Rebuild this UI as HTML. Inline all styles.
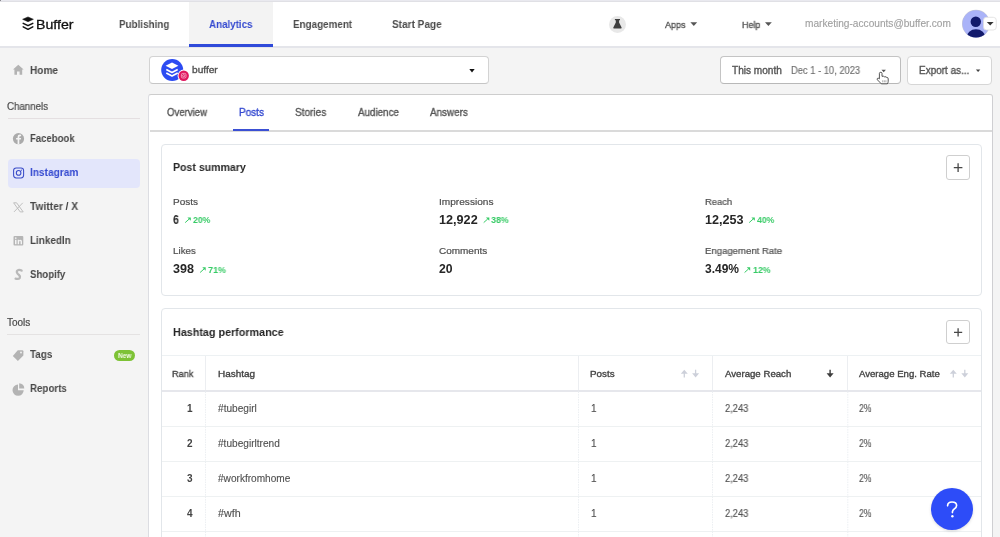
<!DOCTYPE html>
<html><head><meta charset="utf-8">
<style>
*{box-sizing:border-box;margin:0;padding:0}
html,body{width:1000px;height:537px;overflow:hidden;background:#f4f4f4;font-family:"Liberation Sans",sans-serif;color:#3d3d3d}
.a{position:absolute}
.t{position:absolute;white-space:nowrap;line-height:1;display:inline-block;transform-origin:0 0;will-change:transform}
svg{position:absolute;overflow:visible}
</style></head>
<body>
<!-- header -->
<div class="a" style="left:0;top:0;width:1000px;height:1px;background:#e9e9ef"></div>
<div class="a" style="left:0;top:1px;width:1000px;height:1px;background:#e0e0e5"></div>
<div class="a" style="left:0;top:0;width:1px;height:1px;background:#8a8a8f"></div>
<div class="a" style="left:0;top:2px;width:1000px;height:44px;background:#fff"></div>
<div class="a" style="left:0;top:46px;width:1000px;height:2.4px;background:#e4e5ea"></div>
<div class="a" style="left:189px;top:2px;width:83.5px;height:44px;background:#f3f3f3"></div>
<div class="a" style="left:189px;top:44px;width:83.5px;height:2.5px;background:#2f4ad9"></div>

<!-- buffer logo -->
<svg style="left:0;top:0" width="40" height="40">
  <polygon points="28,16.9 33.4,19.3 28,21.7 22.6,19.3" fill="#111" stroke="#111" stroke-width="0.5" stroke-linejoin="round"/>
  <polyline points="23.2,23.3 28,25.7 32.8,23.3" fill="none" stroke="#111" stroke-width="1.5" stroke-linejoin="round" stroke-linecap="round"/>
  <polyline points="23.2,26.9 28,29.3 32.8,26.9" fill="none" stroke="#111" stroke-width="1.5" stroke-linejoin="round" stroke-linecap="round"/>
</svg>

<!-- flask -->
<div class="a" style="left:608.9px;top:15.5px;width:17px;height:17px;border-radius:50%;background:#e8e8e8"></div>
<svg style="left:0;top:0" width="1" height="1">
  <path d="M614.9,19.1 H620 V20.2 H619.1 V22.6 L621.6,27.5 Q621.9,28.5 620.9,28.5 H614 Q613,28.5 613.3,27.5 L615.8,22.6 V20.2 H614.9 Z" fill="#3f3f3f"/>
</svg>
<!-- carets -->
<svg style="left:0;top:0" width="1" height="1">
  <polygon points="690.4,22.2 697.2,22.2 693.8,26" fill="#555"/>
  <polygon points="765,22.2 771.8,22.2 768.4,26" fill="#555"/>
</svg>

<!-- avatar -->
<svg style="left:0;top:0" width="1" height="1">
  <defs><clipPath id="avc"><circle cx="976" cy="23.8" r="13.8"/></clipPath></defs>
  <circle cx="976" cy="23.8" r="14" fill="#c9c9d2"/>
  <circle cx="976" cy="23.8" r="13.6" fill="#aab3f8"/>
  <g clip-path="url(#avc)">
    <circle cx="975.8" cy="21.8" r="5.2" fill="#121a6c"/>
    <ellipse cx="976" cy="37.5" rx="9.5" ry="8.3" fill="#121a6c"/>
  </g>
  <rect x="983.5" y="17.3" width="12.8" height="12.7" rx="3" fill="#fff" stroke="#dedede" stroke-width="0.8"/>
  <polygon points="986.8,22.1 993.6,22.1 990.2,25.6" fill="#333"/>
</svg>

<!-- sidebar -->
<div class="a" style="left:7.5px;top:118px;width:132.5px;height:1px;background:#e4dfe1"></div>
<div class="a" style="left:7px;top:334px;width:133px;height:1px;background:#e4e2e2"></div>
<div class="a" style="left:7.5px;top:159px;width:132.5px;height:28.5px;background:#e3e6fb;border-radius:4px"></div>

<svg style="left:0;top:0" width="1" height="1">
  <!-- home -->
  <path d="M18.3,64.8 L23.6,69.6 H22.2 V74.8 H19.6 V71.6 H17 V74.8 H14.4 V69.6 H13 Z" fill="#b3b3b3"/>
  <!-- facebook -->
  <circle cx="18.5" cy="138.7" r="5.6" fill="#ababab"/>
  <path d="M19.3,144.3 V139.6 H20.8 L21.1,137.9 H19.3 V136.9 Q19.3,136.2 20.1,136.2 H21.1 V134.7 Q20.5,134.6 19.9,134.6 Q17.6,134.6 17.6,136.8 V137.9 H16.1 V139.6 H17.6 V144.3 Z" fill="#f4f4f4"/>
  <!-- instagram -->
  <rect x="13.6" y="167.9" width="10" height="10" rx="2.6" fill="none" stroke="#3a4cc8" stroke-width="1.05"/>
  <circle cx="18.6" cy="172.9" r="2.3" fill="none" stroke="#3a4cc8" stroke-width="1.05"/>
  <circle cx="21.3" cy="170.2" r="0.6" fill="#3a4cc8"/>
  <!-- X -->
  <path d="M13.6,202.8 H16.6 L23.2,211.9 H20.2 Z" fill="none" stroke="#b9b9b9" stroke-width="0.9"/>
  <path d="M22.8,202.8 L14,211.9" stroke="#b9b9b9" stroke-width="0.9"/>
  <!-- linkedin -->
  <rect x="13.5" y="236" width="9.8" height="9.5" rx="1" fill="#b5b5b5"/>
  <rect x="15" y="239.8" width="1.5" height="4.4" fill="#f4f4f4"/>
  <circle cx="15.75" cy="238.1" r="0.85" fill="#f4f4f4"/>
  <path d="M17.7,244.2 V239.8 H19.1 V240.5 Q19.6,239.7 20.6,239.7 Q22,239.7 22,241.4 V244.2 H20.6 V241.7 Q20.6,240.9 20,240.9 Q19.1,240.9 19.1,241.9 V244.2 Z" fill="#f4f4f4"/>
  <!-- shopify S -->
  <path d="M21.6,270.6 Q19.8,269.6 18.3,270 Q16.4,270.7 17,272.7 Q17.5,274 19,275 Q20.5,276.2 19.8,277.8 Q18.6,279.6 15.6,278.6" fill="none" stroke="#b9b9b9" stroke-width="2.3" stroke-linecap="round"/>
  <!-- tags -->
  <path d="M17.8,350.2 H22.3 Q23.4,350.2 23.4,351.3 V355.6 L17.9,361 L12.8,355.9 Z" fill="#b3b3b3"/>
  <circle cx="21" cy="352.5" r="0.9" fill="#f4f4f4"/>
  <!-- reports -->
  <path d="M18,384.6 A5.6,5.6 0 1 0 23.7,390.2 H18 Z" fill="#b3b3b3"/>
  <path d="M19.2,383.2 A5.2,5.2 0 0 1 24.3,388.6 H19.2 Z" fill="#b3b3b3"/>
</svg>
<!-- new badge -->
<div class="a" style="left:113.6px;top:349.8px;width:21.6px;height:11.2px;border-radius:6px;background:#7dc235"></div>
<span class="t" style="left:117.8px;top:352.2px;font-size:7.2px;font-weight:bold;color:#f4fbe9;transform:scaleX(.9)">New</span>

<!-- profile selector -->
<div class="a" style="left:148.8px;top:56.2px;width:339.8px;height:28.3px;background:#fff;border:1px solid #d3d3d3;border-bottom-color:#c6c6c6;border-radius:4px"></div>
<svg style="left:0;top:0" width="1" height="1">
  <circle cx="172.2" cy="70" r="11" fill="#2c4bf2"/>
  <g fill="#fff">
    <polygon points="172,62.5 178.4,65.7 172,68.9 165.6,65.7"/>
    <polyline points="166.3,69.5 172,72.4 177.7,69.5" fill="none" stroke="#fff" stroke-width="1.7" stroke-linejoin="round"/>
    <polyline points="166.3,73.1 172,76 177.7,73.1" fill="none" stroke="#fff" stroke-width="1.7" stroke-linejoin="round"/>
  </g>
  <circle cx="183.7" cy="75.7" r="6.1" fill="#fff"/>
  <circle cx="183.7" cy="75.7" r="5.2" fill="#e0175e"/>
  <rect x="181.4" y="73.4" width="4.6" height="4.6" rx="1.3" fill="none" stroke="#fbc3d8" stroke-width="0.7"/>
  <circle cx="183.7" cy="75.7" r="1.1" fill="none" stroke="#fbc3d8" stroke-width="0.7"/>
  <polygon points="469.3,69 474.7,69 472,72.4" fill="#111"/>
</svg>

<!-- date picker -->
<div class="a" style="left:720.2px;top:56.2px;width:180.6px;height:28.2px;background:#fff;border:1px solid #c4c4c4;border-bottom-color:#b8b8b8;border-right-color:#bdbdbd;border-radius:4px"></div>
<svg style="left:0;top:0" width="1" height="1">
  <polygon points="881.5,69.8 885.9,69.8 883.7,72.3" fill="#555"/>
  <!-- hand cursor -->
  <path d="M879.4,78.6 V73.4 Q879.4,72.3 880.7,72.3 Q882,72.3 882,73.4 V76.3 Q883.9,75.9 884.4,76.8 Q886.4,76.5 886.8,77.5 Q888.2,77.4 888.2,78.7 V81.3 Q888.2,82.7 887.3,83.8 H881.3 L877.4,79.8 Q876.7,78.8 877.6,78.3 Q878.5,77.9 879.4,78.9 Z" fill="#fff" stroke="#1e1e1e" stroke-width="0.75" stroke-linejoin="round"/>
  <path d="M882.7,80.3 V82.3 M884.3,80.3 V82.3 M885.9,80.3 V82.3" stroke="#666" stroke-width="0.55"/>
</svg>

<!-- export -->
<div class="a" style="left:907.2px;top:56.2px;width:85.3px;height:29.3px;background:#fff;border:1px solid #d6d6d6;border-radius:4px"></div>
<svg style="left:0;top:0" width="1" height="1">
  <polygon points="975.9,69.6 980.3,69.6 978.1,71.9" fill="#444"/>
</svg>

<!-- panel -->
<div class="a" style="left:148.2px;top:93.6px;width:844.6px;height:460px;background:#fff;border:1.6px solid #dcdde2;border-top:1.4px solid #cdcdcd;border-right-color:#cfcfd2;border-radius:3px"></div>
<div class="a" style="left:149.5px;top:130px;width:842.2px;height:1.6px;background:#dadada"></div>
<div class="a" style="left:233px;top:129px;width:36.4px;height:2.2px;background:#3b50d4"></div>

<!-- card 1 -->
<div class="a" style="left:160.8px;top:143.5px;width:821.2px;height:152.9px;background:#fff;border:1px solid #e2e6ea;border-radius:4px"></div>
<div class="a" style="left:946.2px;top:155.4px;width:23.8px;height:24.3px;background:#fff;border:1px solid #cfcfcf;border-radius:3px"></div>
<svg style="left:0;top:0" width="1" height="1">
  <path d="M953.8,167.6 H962.4 M958.1,163.3 V171.9" stroke="#474747" stroke-width="1.3"/>
</svg>
<svg style="left:0;top:0" width="1" height="1">
<path d="M185.2,222.6 L189.2,219.0" stroke="#37cb66" stroke-width="1"/><polygon points="190.8,217.4 187.4,217.4 190.8,220.8" fill="#37cb66"/>
<path d="M200.1,272.5 L204.1,268.9" stroke="#37cb66" stroke-width="1"/><polygon points="205.7,267.3 202.3,267.3 205.7,270.7" fill="#37cb66"/>
<path d="M483.7,222.6 L487.7,219.0" stroke="#37cb66" stroke-width="1"/><polygon points="489.3,217.4 485.9,217.4 489.3,220.8" fill="#37cb66"/>
<path d="M749.2,222.6 L753.2,219.0" stroke="#37cb66" stroke-width="1"/><polygon points="754.8,217.4 751.4,217.4 754.8,220.8" fill="#37cb66"/>
<path d="M744.6,272.5 L748.6,268.9" stroke="#37cb66" stroke-width="1"/><polygon points="750.2,267.3 746.8,267.3 750.2,270.7" fill="#37cb66"/>
</svg>

<!-- card 2 -->
<div class="a" style="left:160.8px;top:308.4px;width:821.2px;height:250px;background:#fff;border:1px solid #e2e6ea;border-radius:4px"></div>
<div class="a" style="left:946.2px;top:320.3px;width:23.8px;height:23.8px;background:#fff;border:1px solid #cfcfcf;border-radius:3px"></div>
<svg style="left:0;top:0" width="1" height="1">
  <path d="M954,332.3 H962.2 M958.1,328.2 V336.4" stroke="#474747" stroke-width="1.3"/>
</svg>
<!-- table lines -->
<div class="a" style="left:161.8px;top:355.2px;width:819.2px;height:1px;background:#edf1f3"></div>
<div class="a" style="left:161.8px;top:390px;width:819.2px;height:1.6px;background:#e6e7ec"></div>
<div class="a" style="left:161.8px;top:426.2px;width:819.2px;height:1px;background:#eef1f2"></div>
<div class="a" style="left:161.8px;top:461px;width:819.2px;height:1px;background:#eef1f2"></div>
<div class="a" style="left:161.8px;top:495.8px;width:819.2px;height:1px;background:#eef1f2"></div>
<div class="a" style="left:161.8px;top:530.8px;width:819.2px;height:1px;background:#eef1f2"></div>
<!-- column dividers -->
<div class="a" style="left:205px;top:356px;width:1px;height:34px;background:#eceef1"></div>
<div class="a" style="left:578px;top:356px;width:1px;height:34px;background:#eceef1"></div>
<div class="a" style="left:712px;top:356px;width:1px;height:34px;background:#eceef1"></div>
<div class="a" style="left:847.3px;top:356px;width:1px;height:34px;background:#eceef1"></div>
<svg style="left:0;top:0" width="1" height="1">
  <g stroke="#eceff2" stroke-width="1" stroke-dasharray="1.5 1">
    <path d="M205.5,391.6 V537 M578.5,391.6 V537 M712.5,391.6 V537 M847.8,391.6 V537"/>
  </g>
  <!-- sort arrows -->
  <g stroke="#cdd0da" stroke-width="1.3" fill="#cdd0da">
    <path d="M684.3,372 V377.4" /><polygon points="680.8,373.8 684.3,369.7 687.8,373.8" stroke="none"/>
    <path d="M695.6,369.7 V375" /><polygon points="692.1,373.3 695.6,377.4 699.1,373.3" stroke="none"/>
    <path d="M953.3,372 V377.4" /><polygon points="949.8,373.8 953.3,369.7 956.8,373.8" stroke="none"/>
    <path d="M964.8,369.7 V375" /><polygon points="961.3,373.3 964.8,377.4 968.3,373.3" stroke="none"/>
  </g>
  <g stroke="#3d3d3d" stroke-width="1.4" fill="#3d3d3d">
    <path d="M830.1,369.7 V375" /><polygon points="826.6,373.3 830.1,377.4 833.6,373.3" stroke="none"/>
  </g>
</svg>

<!-- help button -->
<div class="a" style="left:931px;top:488px;width:42px;height:42px;border-radius:50%;background:#2d4cf8;box-shadow:0 1px 3px rgba(0,0,0,.15)"></div>
<svg style="left:0;top:0" width="1" height="1">
  <path d="M947.6,505.8 Q947.6,502 952,502 Q956.6,502 956.6,505.6 Q956.6,507.7 954.2,509 Q952.4,510 952.4,512.6" fill="none" stroke="#fff" stroke-width="1.65" stroke-linecap="round"/>
  <circle cx="952.4" cy="516.2" r="1.2" fill="#fff"/>
</svg>

<span class="t" style="left:36.21px;top:17.75px;font-size:13px;font-weight:normal;color:#111;transform:scaleX(1.0903);-webkit-text-stroke:0.3px #111;">Buffer</span>
<span class="t" style="left:118.75px;top:18.59px;font-size:11px;font-weight:bold;color:#4d4d4d;transform:scaleX(0.8955);">Publishing</span>
<span class="t" style="left:208.80px;top:18.69px;font-size:11px;font-weight:bold;color:#3449d0;transform:scaleX(0.8895);">Analytics</span>
<span class="t" style="left:292.60px;top:18.69px;font-size:11px;font-weight:bold;color:#4d4d4d;transform:scaleX(0.8953);">Engagement</span>
<span class="t" style="left:392.40px;top:18.69px;font-size:11px;font-weight:bold;color:#4d4d4d;transform:scaleX(0.9136);">Start Page</span>
<span class="t" style="left:665.20px;top:19.94px;font-size:9.4px;font-weight:normal;color:#555;transform:scaleX(0.9594);-webkit-text-stroke:0.35px #555;">Apps</span>
<span class="t" style="left:741.80px;top:19.94px;font-size:9.4px;font-weight:normal;color:#555;transform:scaleX(0.9545);-webkit-text-stroke:0.35px #555;">Help</span>
<span class="t" style="left:804.80px;top:18.73px;font-size:10px;font-weight:normal;color:#a0a0a0;transform:scaleX(1.0133);-webkit-text-stroke:0.12px #a0a0a0;">marketing-accounts@buffer.com</span>
<span class="t" style="left:30.00px;top:64.76px;font-size:10.8px;font-weight:bold;color:#474747;transform:scaleX(0.9336);">Home</span>
<span class="t" style="left:7.20px;top:101.53px;font-size:10px;font-weight:normal;color:#4a4a4a;transform:scaleX(0.9704);-webkit-text-stroke:0.2px #4a4a4a;">Channels</span>
<span class="t" style="left:30.20px;top:133.16px;font-size:10.8px;font-weight:bold;color:#474747;transform:scaleX(0.8853);">Facebook</span>
<span class="t" style="left:30.20px;top:167.36px;font-size:10.8px;font-weight:bold;color:#3449d0;transform:scaleX(0.9372);">Instagram</span>
<span class="t" style="left:30.20px;top:201.16px;font-size:10.8px;font-weight:bold;color:#474747;transform:scaleX(0.9479);">Twitter / X</span>
<span class="t" style="left:30.20px;top:235.16px;font-size:10.8px;font-weight:bold;color:#474747;transform:scaleX(0.9179);">LinkedIn</span>
<span class="t" style="left:30.20px;top:268.86px;font-size:10.8px;font-weight:bold;color:#474747;transform:scaleX(0.8918);">Shopify</span>
<span class="t" style="left:7.40px;top:317.94px;font-size:10px;font-weight:normal;color:#4a4a4a;-webkit-text-stroke:0.2px #4a4a4a;">Tools</span>
<span class="t" style="left:30.20px;top:349.06px;font-size:10.8px;font-weight:bold;color:#474747;transform:scaleX(0.9142);">Tags</span>
<span class="t" style="left:30.20px;top:383.06px;font-size:10.8px;font-weight:bold;color:#474747;transform:scaleX(0.9022);">Reports</span>
<span class="t" style="left:192.00px;top:64.50px;font-size:9.8px;font-weight:normal;color:#505050;transform:scaleX(1.0347);-webkit-text-stroke:0.35px #505050;">buffer</span>
<span class="t" style="left:732.20px;top:65.53px;font-size:10px;font-weight:normal;color:#555;transform:scaleX(1.0082);-webkit-text-stroke:0.35px #555;">This month</span>
<span class="t" style="left:790.50px;top:65.53px;font-size:10px;font-weight:normal;color:#6c6c6c;transform:scaleX(0.9358);-webkit-text-stroke:0.12px #6c6c6c;">Dec 1 - 10, 2023</span>
<span class="t" style="left:919.00px;top:65.73px;font-size:10px;font-weight:normal;color:#555;transform:scaleX(0.9940);-webkit-text-stroke:0.35px #555;">Export as...</span>
<span class="t" style="left:166.60px;top:106.71px;font-size:10.5px;font-weight:normal;color:#555;transform:scaleX(0.9145);-webkit-text-stroke:0.35px #555;">Overview</span>
<span class="t" style="left:238.60px;top:106.71px;font-size:10.5px;font-weight:normal;color:#3449d0;transform:scaleX(0.9535);-webkit-text-stroke:0.35px #3449d0;">Posts</span>
<span class="t" style="left:295.00px;top:106.71px;font-size:10.5px;font-weight:normal;color:#555;transform:scaleX(0.9559);-webkit-text-stroke:0.35px #555;">Stories</span>
<span class="t" style="left:357.60px;top:106.71px;font-size:10.5px;font-weight:normal;color:#555;transform:scaleX(0.9330);-webkit-text-stroke:0.35px #555;">Audience</span>
<span class="t" style="left:430.40px;top:106.71px;font-size:10.5px;font-weight:normal;color:#555;transform:scaleX(0.9397);-webkit-text-stroke:0.35px #555;">Answers</span>
<span class="t" style="left:173.00px;top:162.19px;font-size:11px;font-weight:bold;color:#262626;transform:scaleX(0.9597);">Post summary</span>
<span class="t" style="left:173.00px;top:197.10px;font-size:9.8px;font-weight:normal;color:#4e4e4e;transform:scaleX(1.0243);-webkit-text-stroke:0.2px #4e4e4e;">Posts</span>
<span class="t" style="left:173.00px;top:213.84px;font-size:12px;font-weight:bold;color:#262626;transform:scaleX(0.8857);">6</span>
<span class="t" style="left:193.20px;top:216.13px;font-size:9.3px;font-weight:bold;color:#37cb66;transform:scaleX(0.9307);">20%</span>
<span class="t" style="left:173.00px;top:246.10px;font-size:9.8px;font-weight:normal;color:#4e4e4e;transform:scaleX(0.9925);-webkit-text-stroke:0.2px #4e4e4e;">Likes</span>
<span class="t" style="left:173.00px;top:263.24px;font-size:12px;font-weight:bold;color:#262626;transform:scaleX(1.0468);">398</span>
<span class="t" style="left:207.50px;top:265.83px;font-size:9.3px;font-weight:bold;color:#37cb66;transform:scaleX(0.9669);">71%</span>
<span class="t" style="left:438.70px;top:197.10px;font-size:9.8px;font-weight:normal;color:#4e4e4e;transform:scaleX(1.0319);-webkit-text-stroke:0.2px #4e4e4e;">Impressions</span>
<span class="t" style="left:438.70px;top:214.04px;font-size:12px;font-weight:bold;color:#262626;transform:scaleX(1.0532);">12,922</span>
<span class="t" style="left:491.10px;top:216.13px;font-size:9.3px;font-weight:bold;color:#37cb66;transform:scaleX(0.9565);">38%</span>
<span class="t" style="left:438.70px;top:246.10px;font-size:9.8px;font-weight:normal;color:#4e4e4e;transform:scaleX(1.0176);-webkit-text-stroke:0.2px #4e4e4e;">Comments</span>
<span class="t" style="left:438.70px;top:263.44px;font-size:12px;font-weight:bold;color:#262626;transform:scaleX(1.0165);">20</span>
<span class="t" style="left:704.70px;top:197.10px;font-size:9.8px;font-weight:normal;color:#4e4e4e;transform:scaleX(0.9616);-webkit-text-stroke:0.2px #4e4e4e;">Reach</span>
<span class="t" style="left:704.70px;top:214.04px;font-size:12px;font-weight:bold;color:#262626;transform:scaleX(1.0505);">12,253</span>
<span class="t" style="left:757.00px;top:216.13px;font-size:9.3px;font-weight:bold;color:#37cb66;transform:scaleX(0.9307);">40%</span>
<span class="t" style="left:704.70px;top:246.10px;font-size:9.8px;font-weight:normal;color:#4e4e4e;transform:scaleX(0.9771);-webkit-text-stroke:0.2px #4e4e4e;">Engagement Rate</span>
<span class="t" style="left:704.70px;top:263.24px;font-size:12px;font-weight:bold;color:#262626;">3.49%</span>
<span class="t" style="left:752.80px;top:265.83px;font-size:9.3px;font-weight:bold;color:#37cb66;transform:scaleX(0.9513);">12%</span>
<span class="t" style="left:173.00px;top:326.99px;font-size:11px;font-weight:bold;color:#262626;transform:scaleX(0.9781);">Hashtag performance</span>
<span class="t" style="left:172.10px;top:369.06px;font-size:9.5px;font-weight:normal;color:#444;transform:scaleX(0.9631);-webkit-text-stroke:0.35px #444;">Rank</span>
<span class="t" style="left:217.80px;top:369.06px;font-size:9.5px;font-weight:normal;color:#444;transform:scaleX(1.0484);-webkit-text-stroke:0.35px #444;">Hashtag</span>
<span class="t" style="left:590.20px;top:369.06px;font-size:9.5px;font-weight:normal;color:#444;transform:scaleX(1.0329);-webkit-text-stroke:0.35px #444;">Posts</span>
<span class="t" style="left:724.50px;top:369.06px;font-size:9.5px;font-weight:normal;color:#444;transform:scaleX(1.0149);-webkit-text-stroke:0.35px #444;">Average Reach</span>
<span class="t" style="left:859.20px;top:369.06px;font-size:9.5px;font-weight:normal;color:#444;transform:scaleX(1.0086);-webkit-text-stroke:0.35px #444;">Average Eng. Rate</span>
<span class="t" style="left:187.20px;top:403.54px;font-size:10px;font-weight:bold;color:#444;">1</span>
<span class="t" style="left:218.00px;top:403.54px;font-size:10px;font-weight:normal;color:#505050;transform:scaleX(1.0121);-webkit-text-stroke:0.12px #505050;">#tubegirl</span>
<span class="t" style="left:590.70px;top:403.54px;font-size:10px;font-weight:normal;color:#505050;-webkit-text-stroke:0.12px #505050;">1</span>
<span class="t" style="left:724.80px;top:403.54px;font-size:10px;font-weight:normal;color:#505050;transform:scaleX(0.9308);-webkit-text-stroke:0.12px #505050;">2,243</span>
<span class="t" style="left:859.20px;top:403.54px;font-size:10px;font-weight:normal;color:#505050;transform:scaleX(0.8653);-webkit-text-stroke:0.12px #505050;">2%</span>
<span class="t" style="left:187.20px;top:438.54px;font-size:10px;font-weight:bold;color:#444;">2</span>
<span class="t" style="left:218.00px;top:438.54px;font-size:10px;font-weight:normal;color:#505050;transform:scaleX(1.0101);-webkit-text-stroke:0.12px #505050;">#tubegirltrend</span>
<span class="t" style="left:590.70px;top:438.54px;font-size:10px;font-weight:normal;color:#505050;-webkit-text-stroke:0.12px #505050;">1</span>
<span class="t" style="left:724.80px;top:438.54px;font-size:10px;font-weight:normal;color:#505050;transform:scaleX(0.9308);-webkit-text-stroke:0.12px #505050;">2,243</span>
<span class="t" style="left:859.20px;top:438.54px;font-size:10px;font-weight:normal;color:#505050;transform:scaleX(0.8653);-webkit-text-stroke:0.12px #505050;">2%</span>
<span class="t" style="left:187.20px;top:473.54px;font-size:10px;font-weight:bold;color:#444;">3</span>
<span class="t" style="left:218.00px;top:473.54px;font-size:10px;font-weight:normal;color:#505050;transform:scaleX(1.0093);-webkit-text-stroke:0.12px #505050;">#workfromhome</span>
<span class="t" style="left:590.70px;top:473.54px;font-size:10px;font-weight:normal;color:#505050;-webkit-text-stroke:0.12px #505050;">1</span>
<span class="t" style="left:724.80px;top:473.54px;font-size:10px;font-weight:normal;color:#505050;transform:scaleX(0.9308);-webkit-text-stroke:0.12px #505050;">2,243</span>
<span class="t" style="left:859.20px;top:473.54px;font-size:10px;font-weight:normal;color:#505050;transform:scaleX(0.8653);-webkit-text-stroke:0.12px #505050;">2%</span>
<span class="t" style="left:187.20px;top:508.54px;font-size:10px;font-weight:bold;color:#444;">4</span>
<span class="t" style="left:218.00px;top:508.54px;font-size:10px;font-weight:normal;color:#505050;transform:scaleX(1.0700);-webkit-text-stroke:0.12px #505050;">#wfh</span>
<span class="t" style="left:590.70px;top:508.54px;font-size:10px;font-weight:normal;color:#505050;-webkit-text-stroke:0.12px #505050;">1</span>
<span class="t" style="left:724.80px;top:508.54px;font-size:10px;font-weight:normal;color:#505050;transform:scaleX(0.9308);-webkit-text-stroke:0.12px #505050;">2,243</span>
<span class="t" style="left:859.20px;top:508.54px;font-size:10px;font-weight:normal;color:#505050;transform:scaleX(0.8653);-webkit-text-stroke:0.12px #505050;">2%</span>
</body></html>
